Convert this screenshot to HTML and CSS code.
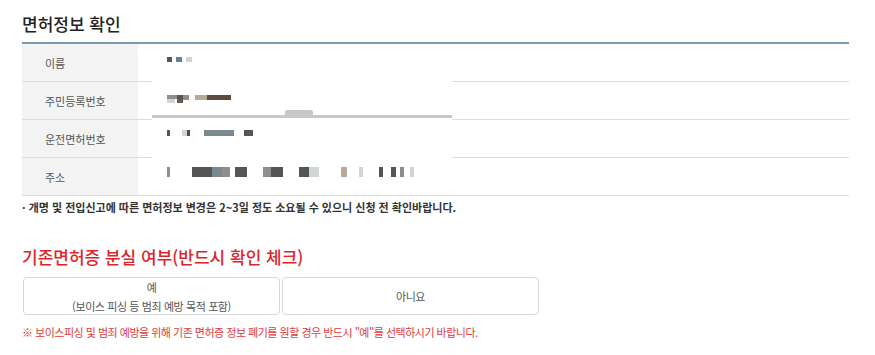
FILE: index.html
```html
<!DOCTYPE html>
<html lang="ko">
<head>
<meta charset="utf-8">
<link rel="stylesheet" href="styles.css">
</head>
<body>
<div class="page">
  <h2 class="title">면허정보 확인</h2>
  <div class="table">
    <div class="row">
      <div class="label">이름</div>
      <div class="value"><span class="blk w5 c-dark"></span><span class="gap4"></span><span class="blk w6 c-blue"></span><span class="gap4"></span><span class="blk w6 c-light"></span></div>
    </div>
    <div class="row">
      <div class="label">주민등록번호</div>
      <div class="value">
        <span class="stack"><span class="blk w10 c-mid"></span><span class="blk w8 c-pale"></span></span>
        <span class="stack"><span class="blk w6 c-dark"></span><span class="blk w6 c-brown"></span></span>
        <span class="blk w6 c-mid"></span>
        <span class="gap6"></span>
        <span class="blk w12 c-tan"></span><span class="blk w24 c-darkbrown"></span>
      </div>
    </div>
    <div class="row">
      <div class="label">운전면허번호</div>
      <div class="value row3">
        <span class="blk w3 c-dark"></span><span class="gap12"></span>
        <span class="blk w5 c-pale"></span><span class="blk w3 c-darkbrown"></span><span class="gap14"></span>
        <span class="blk w30 c-slate"></span><span class="gap10"></span>
        <span class="blk w9 c-dark"></span>
      </div>
    </div>
    <div class="row">
      <div class="label">주소</div>
      <div class="value row4">
        <span class="blk w3 c-mid"></span><span class="gap22"></span>
        <span class="blk w20 c-dark"></span><span class="blk w10 c-slate"></span><span class="blk w8 c-mid"></span><span class="gap5"></span>
        <span class="blk w12 c-dark"></span><span class="gap16"></span>
        <span class="blk w8 c-mid"></span><span class="blk w12 c-dark"></span><span class="gap16"></span>
        <span class="blk w10 c-dark"></span><span class="blk w10 c-pale"></span><span class="gap22"></span>
        <span class="blk w6 c-tan"></span><span class="gap12"></span><span class="blk w4 c-pale"></span><span class="gap16"></span>
        <span class="blk w4 c-dark"></span><span class="gap8"></span>
        <span class="blk w5 c-dark"></span><span class="gap4"></span><span class="blk w4 c-mid"></span><span class="gap6"></span>
        <span class="blk w4 c-pale"></span>
      </div>
    </div>
    <div class="mask"><div class="mask-bar"><span class="mask-bump"></span></div></div>
  </div>
  <p class="note">· 개명 및 전입신고에 따른 면허정보 변경은 2~3일 정도 소요될 수 있으니 신청 전 확인바랍니다.</p>

  <h3 class="sub-title">기존면허증 분실 여부(반드시 확인 체크)</h3>
  <div class="choices">
    <button class="choice">예<br>(보이스 피싱 등 범죄 예방 목적 포함)</button>
    <button class="choice">아니요</button>
  </div>
  <p class="warn">※ 보이스피싱 및 범죄 예방을 위해 기존 면허증 정보 폐기를 원할 경우 반드시 "예"를 선택하시기 바랍니다.</p>
</div>
</body>
</html>
```

FILE: styles.css
```css
* { box-sizing: border-box; }
body {
  margin: 0;
  background: #fff;
  font-family: "Noto Sans CJK KR", "Noto Sans", sans-serif;
  color: #333;
}
.page {
  width: 849px;
  padding-left: 22px;
}
.title {
  margin: 0;
  padding: 12px 0 6px;
  font-size: 17px;
  line-height: 24px;
  font-weight: 500;
  color: #222;
}
.table {
  position: relative;
  border-top: 2px solid #7c9cb1;
}
.row {
  display: flex;
  height: 38px;
  border-bottom: 1px solid #dcdcdc;
}
.label {
  width: 116px;
  flex: none;
  background: #f3f3f3;
  display: flex;
  align-items: center;
  padding-left: 23px;
  font-size: 11px;
  color: #555;
}
.value {
  flex: 1;
  display: flex;
  align-items: flex-start;
  padding: 13px 0 0 29px;
  position: relative;
  z-index: 2;
}
.row3 { padding-top: 10px; }
.row4 { padding-top: 9px; }
.blk { display: block; height: 5px; flex: none; }
.stack { display: flex; flex-direction: column; }
.row .value .stack .blk { height: 4px; }
.row4 .blk { height: 10px; }
.row3 .blk { height: 6px; }
.w3 { width: 3px; } .w4 { width: 4px; } .w5 { width: 5px; } .w6 { width: 6px; }
.w8 { width: 8px; } .w9 { width: 9px; } .w10 { width: 10px; } .w12 { width: 12px; }
.w20 { width: 20px; } .w24 { width: 24px; } .w30 { width: 30px; }
.gap4 { width: 4px; flex: none; }
.gap5 { width: 5px; flex: none; } .gap6 { width: 6px; flex: none; } .gap8 { width: 8px; flex: none; }
.gap10 { width: 10px; flex: none; } .gap12 { width: 12px; flex: none; } .gap14 { width: 14px; flex: none; }
.gap16 { width: 16px; flex: none; } .gap22 { width: 22px; flex: none; } .gap28 { width: 28px; flex: none; }
.c-dark { background: #555; }
.c-blue { background: #6a8090; }
.c-light { background: #d4d4d4; }
.c-mid { background: #8e8e8e; }
.c-pale { background: #cfd6d4; }
.c-brown { background: #6b5a4a; }
.c-tan { background: #b8a898; }
.c-darkbrown { background: #5a4a40; }
.c-slate { background: #7a8890; }
.mask {
  position: absolute;
  left: 130px;
  top: 0;
  width: 300px;
  height: 151px;
  background: #fff;
  z-index: 1;
}
.mask-bar {
  position: absolute;
  left: 0;
  top: 71px;
  width: 100%;
  height: 3px;
  background: #c8c8c8;
}
.mask-bump {
  position: absolute;
  left: 133px;
  top: -5px;
  width: 28px;
  height: 5px;
  background: #c8c8c8;
  border-radius: 2px 2px 0 0;
}
.note {
  margin: 2px 0 0;
  font-size: 11px;
  line-height: 18px;
  font-weight: 700;
  color: #333;
  letter-spacing: 0;
}
.sub-title {
  margin: 29px 0 0;
  font-size: 17px;
  line-height: 24px;
  font-weight: 500;
  color: #d9272c;
}
.choices {
  display: grid;
  grid-template-columns: 257px 257px;
  gap: 2px;
  margin-top: 8px;
  padding-left: 1px;
}
.choice {
  height: 38px;
  background: #fff;
  border: 1px solid #d9d9d9;
  border-radius: 4px;
  font-family: inherit;
  font-size: 11px;
  line-height: 19px;
  color: #555;
  padding: 0;
  letter-spacing: -0.4px;
}
.warn {
  margin: 8px 0 0;
  font-size: 11px;
  line-height: 18px;
  color: #e03a3a;
  letter-spacing: -0.5px;
}
```
